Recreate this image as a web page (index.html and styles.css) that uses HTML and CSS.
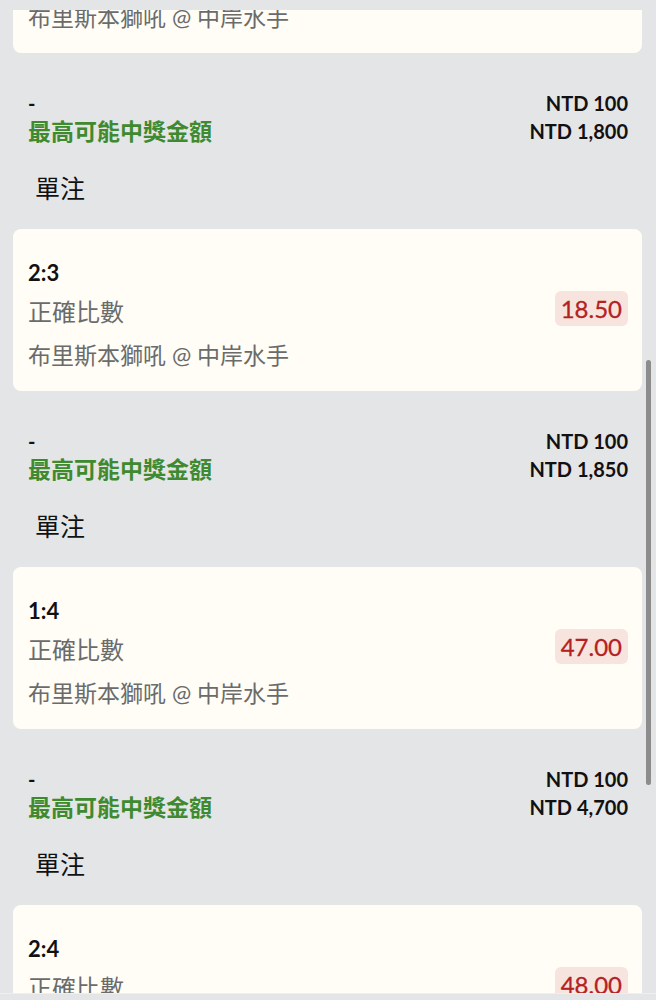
FILE: index.html
```html
<!DOCTYPE html>
<html lang="zh-Hant">
  <head>
    <meta charset="UTF-8" />
    <meta name="viewport" content="width=device-width, initial-scale=1.0" />
    <title>投注單</title>
    <link rel="stylesheet" href="styles.css">
    <script>
      document.addEventListener('DOMContentLoaded', () => {
        const list = document.querySelector('.bet-list');
        // Scroll position the list was captured at
        list.scrollTop = 457;
      });
    </script>
  </head>
  <body>
    <div class="page">
      <div class="bet-list">
        <div class="bet-card">
          <div class="bet-info">
            <div class="score">1:3</div>
            <div class="market">正確比數</div>
            <div class="match">布里斯本獅吼 @ 中岸水手</div>
          </div>
          <div class="odds">24.00</div>
        </div>
        <div class="summary">
          <div class="summary-row">
            <span class="dash">-</span>
            <span class="amount">NTD 100</span>
          </div>
          <div class="summary-row">
            <span class="payout-label">最高可能中獎金額</span>
            <span class="amount">NTD 2,400</span>
          </div>
          <div class="bet-type">單注</div>
        </div>

        <div class="bet-card">
          <div class="bet-info">
            <div class="score">3:2</div>
            <div class="market">正確比數</div>
            <div class="match">布里斯本獅吼 @ 中岸水手</div>
          </div>
          <div class="odds">18.00</div>
        </div>
        <div class="summary">
          <div class="summary-row">
            <span class="dash">-</span>
            <span class="amount">NTD 100</span>
          </div>
          <div class="summary-row">
            <span class="payout-label">最高可能中獎金額</span>
            <span class="amount">NTD 1,800</span>
          </div>
          <div class="bet-type">單注</div>
        </div>

        <div class="bet-card">
          <div class="bet-info">
            <div class="score">2:3</div>
            <div class="market">正確比數</div>
            <div class="match">布里斯本獅吼 @ 中岸水手</div>
          </div>
          <div class="odds">18.50</div>
        </div>
        <div class="summary">
          <div class="summary-row">
            <span class="dash">-</span>
            <span class="amount">NTD 100</span>
          </div>
          <div class="summary-row">
            <span class="payout-label">最高可能中獎金額</span>
            <span class="amount">NTD 1,850</span>
          </div>
          <div class="bet-type">單注</div>
        </div>

        <div class="bet-card">
          <div class="bet-info">
            <div class="score">1:4</div>
            <div class="market">正確比數</div>
            <div class="match">布里斯本獅吼 @ 中岸水手</div>
          </div>
          <div class="odds">47.00</div>
        </div>
        <div class="summary">
          <div class="summary-row">
            <span class="dash">-</span>
            <span class="amount">NTD 100</span>
          </div>
          <div class="summary-row">
            <span class="payout-label">最高可能中獎金額</span>
            <span class="amount">NTD 4,700</span>
          </div>
          <div class="bet-type">單注</div>
        </div>

        <div class="bet-card">
          <div class="bet-info">
            <div class="score">2:4</div>
            <div class="market">正確比數</div>
            <div class="match">布里斯本獅吼 @ 中岸水手</div>
          </div>
          <div class="odds">48.00</div>
        </div>
        <div class="summary">
          <div class="summary-row">
            <span class="dash">-</span>
            <span class="amount">NTD 100</span>
          </div>
          <div class="summary-row">
            <span class="payout-label">最高可能中獎金額</span>
            <span class="amount">NTD 4,800</span>
          </div>
          <div class="bet-type">單注</div>
        </div>
      </div>
      <div class="scroll-thumb"></div>
    </div>
  </body>
</html>
```

FILE: styles.css
```css
:root {
  --page-bg: #e4e5e7;
  --card-bg: #fffdf6;
  --green: #3f8a2e;
  --red: #b3221f;
  --badge-bg: #f8e4de;
  --muted: #6b6b6b;
  --text-color: #111;
}

body {
  font-family: Lato, "Noto Sans CJK TC", sans-serif;
  margin: 0;
  padding: 0;
  background-color: var(--page-bg);
  color: var(--text-color);
  overflow: hidden;
}

.page {
  position: relative;
  padding-top: 10px;
}

.bet-list {
  height: 983px;
  overflow: hidden;
  padding: 0 14px 0 13px;
  border-bottom: 1px solid #eeeff1;
}

.bet-card {
  background-color: var(--card-bg);
  border-radius: 8px;
  padding: 30px 14px 20px 15px;
  height: 162px;
  box-sizing: border-box;
  display: flex;
  justify-content: space-between;
  align-items: center;
}

.score {
  font-size: 22px;
  font-weight: 700;
  line-height: 28px;
}

.market {
  font-size: 24px;
  line-height: 32px;
  color: var(--muted);
  margin-top: 9px;
}

.match {
  font-size: 23px;
  line-height: 32px;
  color: var(--muted);
  margin-top: 11px;
}

.odds {
  font-size: 24px;
  line-height: 35px;
  padding: 0 6px;
  border-radius: 6px;
  background-color: var(--badge-bg);
  color: var(--red);
  -webkit-text-stroke: 0.3px var(--red);
  margin-top: -14px;
}

.summary {
  height: 176px;
  box-sizing: border-box;
  padding: 36px 14px 0 15px;
}

.summary-row {
  display: flex;
  justify-content: space-between;
  align-items: center;
  line-height: 28px;
}

.dash {
  font-size: 20px;
  font-weight: 700;
}

.amount {
  font-size: 20px;
  font-weight: 700;
}

.payout-label {
  font-size: 23px;
  font-weight: 700;
  color: var(--green);
}

.bet-type {
  font-size: 25px;
  line-height: 34px;
  margin: 26px 0 0 7px;
}

.scroll-thumb {
  position: absolute;
  top: 360px;
  right: 5px;
  width: 5px;
  height: 425px;
  border-radius: 3px;
  background-color: #8c8c8c;
}
```
